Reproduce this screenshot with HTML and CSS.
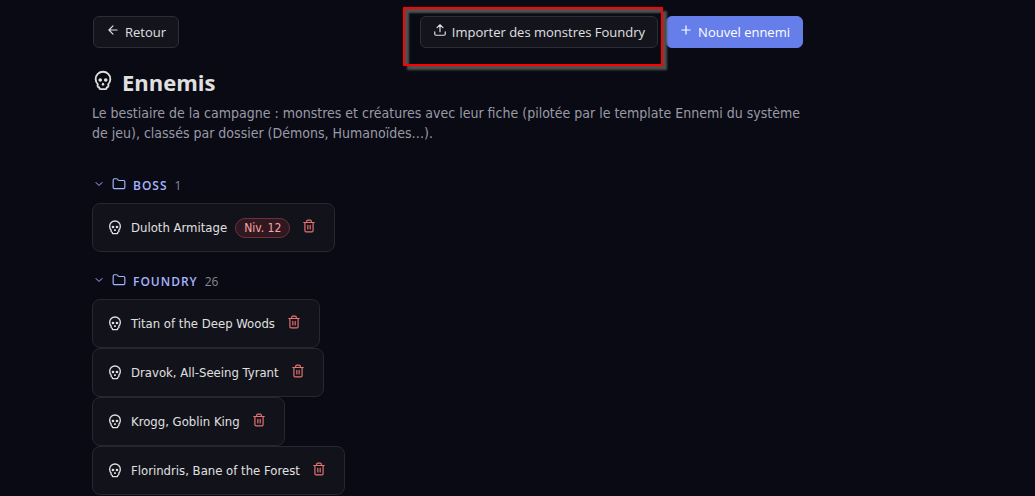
FILE: index.html
```html
<!DOCTYPE html>
<html lang="fr">
<head>
<meta charset="utf-8">
<meta name="viewport" content="width=device-width, initial-scale=1">
<title>Ennemis</title>
<link rel="stylesheet" href="styles.css">
</head>
<body>
<svg class="sprite" aria-hidden="true">
  <symbol id="skull" viewBox="0 0 24 24"><path d="m12.5 17-.5-1-.5 1h1z"/><path d="M15 22a1 1 0 0 0 1-1v-1a2 2 0 0 0 1.56-3.25 8 8 0 1 0-11.12 0A2 2 0 0 0 8 20v1a1 1 0 0 0 1 1z"/><circle cx="15" cy="12" r="1"/><circle cx="9" cy="12" r="1"/></symbol>
  <symbol id="trash" viewBox="0 0 24 24"><path d="M3 6h18M19 6v14a2 2 0 0 1-2 2H7a2 2 0 0 1-2-2V6M8 6V4a2 2 0 0 1 2-2h4a2 2 0 0 1 2 2v2M10 11v6M14 11v6"/></symbol>
  <symbol id="folder" viewBox="0 0 24 24"><path d="M20 20a2 2 0 0 0 2-2V8a2 2 0 0 0-2-2h-7.9a2 2 0 0 1-1.69-.9L9.6 3.9A2 2 0 0 0 7.93 3H4a2 2 0 0 0-2 2v13a2 2 0 0 0 2 2Z"/></symbol>
  <symbol id="chevron" viewBox="0 0 24 24"><path d="m6 9 6 6 6-6"/></symbol>
</svg>
<main class="page">
  <header class="toolbar">
    <button class="btn" type="button"><svg class="icon icon-sm" viewBox="0 0 24 24"><path d="m12 19-7-7 7-7M19 12H5"/></svg>Retour</button>
    <div class="actions">
      <div class="import">
        <button class="btn" type="button"><svg class="icon icon-sm" viewBox="0 0 24 24"><path d="M12 3v12M17 8l-5-5-5 5M21 15v4a2 2 0 0 1-2 2H5a2 2 0 0 1-2-2v-4"/></svg>Importer des monstres Foundry</button>
        <span class="highlight"></span>
      </div>
      <button class="btn btn-primary" type="button"><svg class="icon icon-sm" viewBox="0 0 24 24"><path d="M5 12h14M12 5v14"/></svg>Nouvel ennemi</button>
    </div>
  </header>
  <h1 class="title"><svg class="icon icon-lg"><use href="#skull"/></svg>Ennemis</h1>
  <p class="intro">Le bestiaire de la campagne : monstres et créatures avec leur fiche (pilotée par le template Ennemi du système de jeu), classés par dossier (Démons, Humanoïdes…).</p>

  <section class="group">
    <button class="group-head" type="button" aria-expanded="true"><svg class="icon icon-xs"><use href="#chevron"/></svg><svg class="icon icon-sm"><use href="#folder"/></svg><span class="group-name">Boss</span><span class="count">1</span></button>
    <ul class="list">
      <li class="card"><svg class="icon icon-md"><use href="#skull"/></svg><a class="name" href="#duloth">Duloth Armitage</a><span class="badge">Niv. 12</span><button class="delete" type="button" aria-label="Supprimer"><svg class="icon icon-sm"><use href="#trash"/></svg></button></li>
    </ul>
  </section>

  <section class="group">
    <button class="group-head" type="button" aria-expanded="true"><svg class="icon icon-xs"><use href="#chevron"/></svg><svg class="icon icon-sm"><use href="#folder"/></svg><span class="group-name">Foundry</span><span class="count">26</span></button>
    <ul class="list">
      <li class="card"><svg class="icon icon-md"><use href="#skull"/></svg><a class="name" href="#titan">Titan of the Deep Woods</a><button class="delete" type="button" aria-label="Supprimer"><svg class="icon icon-sm"><use href="#trash"/></svg></button></li>
      <li class="card"><svg class="icon icon-md"><use href="#skull"/></svg><a class="name" href="#dravok">Dravok, All-Seeing Tyrant</a><button class="delete" type="button" aria-label="Supprimer"><svg class="icon icon-sm"><use href="#trash"/></svg></button></li>
      <li class="card"><svg class="icon icon-md"><use href="#skull"/></svg><a class="name" href="#krogg">Krogg, Goblin King</a><button class="delete" type="button" aria-label="Supprimer"><svg class="icon icon-sm"><use href="#trash"/></svg></button></li>
      <li class="card"><svg class="icon icon-md"><use href="#skull"/></svg><a class="name" href="#florindris">Florindris, Bane of the Forest</a><button class="delete" type="button" aria-label="Supprimer"><svg class="icon icon-sm"><use href="#trash"/></svg></button></li>
    </ul>
  </section>
</main>
</body>
</html>
```
FILE: styles.css
```css
* { box-sizing: border-box; }

body {
  margin: 0;
  background: #0a0a14;
  color: #e0e0e0;
  font-family: "Open Sans", "Noto Sans", sans-serif;
  font-size: 14px;
}

button { font: inherit; cursor: pointer; }

.sprite { display: none; }

.icon {
  flex: none;
  fill: none;
  stroke: currentColor;
  stroke-width: 2;
  stroke-linecap: round;
  stroke-linejoin: round;
}
.icon-xs { width: 12px; height: 12px; }
.icon-sm { width: 14px; height: 14px; }
.icon-md { width: 16px; height: 16px; }
.icon-lg { width: 22px; height: 22px; }

.page {
  max-width: 803px;
  padding: 16px 0 0 92px;
}

.toolbar,
.actions {
  display: flex;
  justify-content: space-between;
}
.toolbar { padding-left: 1px; }
.actions { gap: 8px; }

.btn {
  display: flex;
  align-items: center;
  gap: 5px;
  height: 32px;
  padding: 0 12px;
  border: 1px solid #2d2d38;
  border-radius: 6px;
  background: #14141d;
  color: #e0e0e0;
  font-size: 13px;
  white-space: nowrap;
}
.btn .icon { margin-bottom: 4px; }
.btn-primary {
  border-color: #667eea;
  background: #667eea;
  color: #fff;
}

.import { position: relative; }
.highlight {
  position: absolute;
  inset: -9px -5px -18px -17px;
  border: 2px solid #f00;
  box-shadow: 4px 4px 2px #505050, inset 4px 4px 2px #505050;
  pointer-events: none;
}

.title {
  display: flex;
  align-items: center;
  gap: 8px;
  margin: 17px 0 4px;
  font-size: 22px;
  line-height: 34px;
}
.title .icon { margin-bottom: 4px; }

.intro {
  margin: 0 0 32px;
  color: #9a9aa6;
  font-family: "DejaVu Sans Condensed", "Open Sans", sans-serif;
  line-height: 20px;
}

.group { margin-bottom: 19px; }

.group-head {
  display: flex;
  align-items: center;
  gap: 7px;
  height: 20px;
  margin-bottom: 8px;
  padding: 0 1px;
  border: 0;
  background: none;
  color: #a5b4fc;
  font-size: 12px;
}
.group-head .icon { margin-bottom: 3px; }
.group-name {
  font-weight: 600;
  letter-spacing: 1px;
  text-transform: uppercase;
}
.count { color: #888893; }

.list {
  display: flex;
  flex-direction: column;
  align-items: flex-start;
  margin: 0;
  padding: 0;
  list-style: none;
}

.card {
  display: flex;
  align-items: center;
  gap: 8px;
  height: 49px;
  padding: 0 14px;
  border: 1px solid #272731;
  border-radius: 8px;
  background: #12121a;
  font-family: "DejaVu Sans Condensed", "Open Sans", sans-serif;
}
.card > .icon { margin-bottom: 2px; }

.name {
  color: #e0e0e0;
  font-size: 13px;
  text-decoration: none;
}

.badge {
  padding: 0 8px;
  border: 1px solid #6f3038;
  border-radius: 10px;
  background: #2f1820;
  color: #fca5a5;
  font-size: 12px;
  line-height: 18px;
}

.delete {
  display: flex;
  margin-bottom: 3px;
  padding: 4px;
  border: 0;
  background: none;
  color: #e57373;
}
```
